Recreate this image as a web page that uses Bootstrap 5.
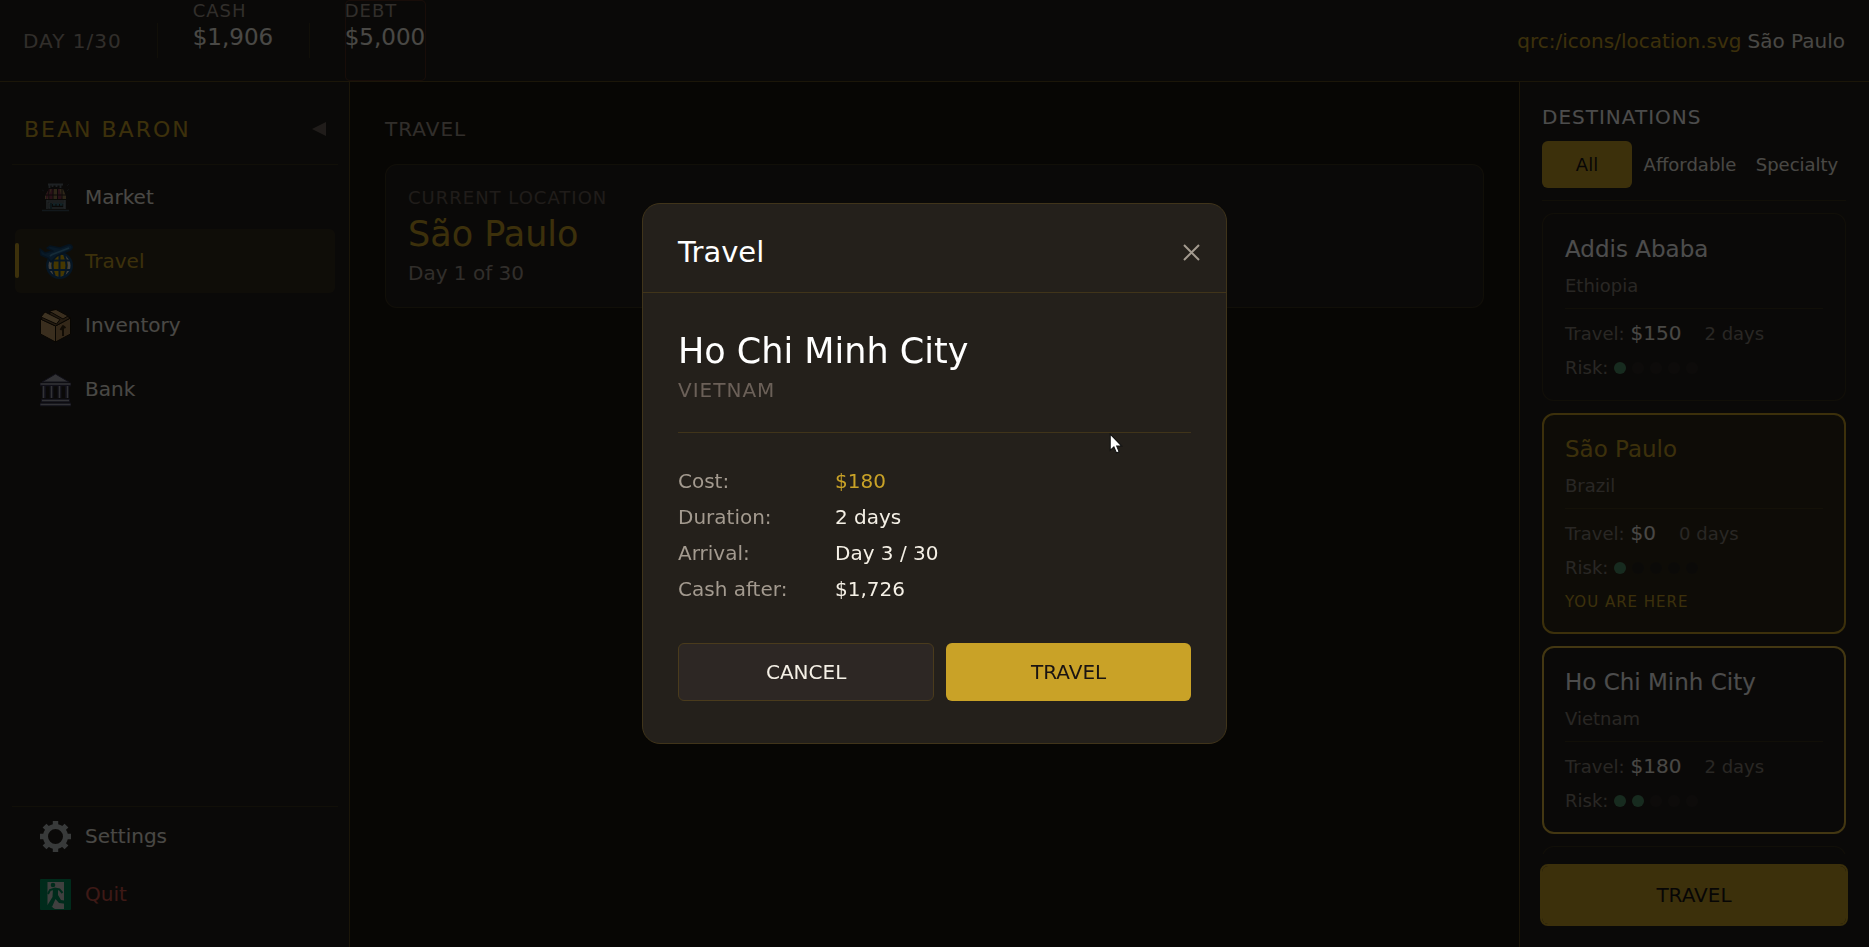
<!DOCTYPE html>
<html lang="en" data-bs-theme="dark">
<head>
<meta charset="utf-8">
<meta name="viewport" content="width=device-width, initial-scale=1">
<title>Bean Baron</title>
<link href="https://cdn.jsdelivr.net/npm/bootstrap@5.3.0/dist/css/bootstrap.min.css" rel="stylesheet">
<style>
:root{--gold:#c9a227;--ink:#f5f0e6;--soft:#a39a8f;--faint:#6b6058;--surface:#24201b;--ground:#1a1610;--edge:rgba(201,162,39,.34);--edge-soft:rgba(201,162,39,.14)}
body{font-family:"DejaVu Sans",sans-serif;font-size:20px;line-height:24px;color:var(--ink);background:var(--ground)}
button{font-family:inherit}
a{text-decoration:none}
h1,h2,h3,p,dl,dd,dt{margin:0;font-weight:400}
.spaced{letter-spacing:1px}
.soft{color:var(--soft)}
.dim{color:#8a827a}
.faint{color:var(--faint)}
.gold{color:var(--gold)}
.t15{font-size:15px;line-height:21px}
.t18{font-size:18px;line-height:21px}
.t20{font-size:20px;line-height:24px}
.t22{font-size:22px;line-height:27px}
.t23{font-size:23px;line-height:27px}
.t29{font-size:29px;line-height:34px}
.t35{font-size:35px;line-height:41px}
.rule{height:1px;background:var(--edge-soft);flex:none}

.topbar{height:82px;padding:0 24px 0 23px;background:var(--surface);border-bottom:1px solid var(--edge)}
.stats{gap:35px}
.tick{width:1px;height:35px;background:var(--edge-soft)}
.stat{gap:3px;min-width:81px}
.stat-debt{border-radius:5px;box-shadow:inset 0 0 0 1px rgba(192,80,50,.3)}
.place{gap:6px}

.side{width:350px;flex:none;padding:12px 11px 24px 12px;background:var(--surface);border-right:1px solid var(--edge)}
.brand{height:70px;padding:0 12px}
.brand h1{letter-spacing:2px}
.fold{border:0;background:none;padding:0;color:var(--faint)}
.menu{padding:0 3px}
.entry{height:64px;padding:0 23px;gap:12px;color:var(--ink);border-radius:6px;position:relative}
.entry svg{width:35px;height:35px;flex:none}
.entry.on{color:var(--gold);background:rgba(201,162,39,.1)}
.entry.on::before{content:"";position:absolute;left:0;top:14px;width:4px;height:35px;border-radius:2px;background:var(--gold)}
.entry.low{height:58px}
.quit{color:#d0564c}

.stage{padding:35px}
.here{margin-top:23px;padding:22px;border:1px solid var(--edge-soft);border-radius:12px;background:var(--surface)}
.here div + div{margin-top:6px}

.dest{width:350px;flex:none;padding:23px 23px 23px 22px;gap:12px;background:var(--surface);border-left:1px solid var(--edge)}
.filters{gap:6px}
.filters button{height:47px;border:0;border-radius:6px;background:none;color:var(--ink);padding:0}
.filters .on{background:var(--gold);color:#1a1412}
.f-a{flex:90 1 0}.f-b{flex:104 1 0}.f-c{flex:98 1 0}
.cities{gap:12px;min-height:0}
.city{flex:none;padding:22px;gap:12px;border:1px solid var(--edge-soft);border-radius:12px;background:var(--surface)}
.city.now,.city.pick{border:2px solid var(--gold);padding:21px}
.city.now{background:#302a1a}
.city.pick{border-color:#e0b83c}
.fare{gap:6px}
.fare .days{margin-left:17px}
.risk{gap:6px}
.risk i{width:12px;height:12px;border-radius:6px;background:#2d2724}
.risk i.lit{background:#4f8f68}
.city.now .risk i:not(.lit){background:#27241d}
.placed{padding-top:2px;margin-bottom:-2px}
.go{height:58px;border:0;border-radius:6px;background:var(--gold);color:#1a1412;outline:2px solid var(--gold)}

.modal-backdrop{--bs-backdrop-opacity:.7}
.modal-dialog{--bs-modal-width:585px;max-width:585px}
.ask{position:relative;border:1px solid #40341a;border-radius:18px;background:var(--surface);color:var(--ink)}
.ask header{padding:31px 26px 23px 35px;border-bottom:1px solid #40341a}
.shut{border:0;background:none;padding:0;width:17px;height:24px;color:var(--soft);display:flex;align-items:center;justify-content:center}
.ask-body{padding:38px 35px 42px}
.ask-body .rule{background:#40341a;margin:30px 0 36px}
.country{margin-top:6px}
.facts{display:grid;grid-template-columns:157px 1fr;row-gap:12px}
.choice{gap:12px;margin-top:42px}
.choice button{height:58px;border-radius:6px}
.cancel{flex:256 1 0;border:1px solid #4a3b1c;background:#2d2724;color:var(--ink)}
.confirm{flex:246 1 0;border:0;background:var(--gold);color:#1a1412}
.pointer{position:absolute;left:80%;top:229px;width:15px;height:22px}
</style>
<script src="https://cdn.jsdelivr.net/npm/bootstrap@5.3.0/dist/js/bootstrap.bundle.min.js" defer></script>
</head>
<body class="overflow-hidden">
<div class="d-flex flex-column vh-100">
  <div class="topbar d-flex justify-content-between flex-shrink-0">
    <div class="stats d-flex align-items-center">
      <span class="soft spaced">DAY 1/30</span>
      <span class="tick"></span>
      <div class="stat d-flex flex-column align-self-stretch"><span class="t18 spaced soft">CASH</span><span class="t23">$1,906</span></div>
      <span class="tick"></span>
      <div class="stat stat-debt d-flex flex-column align-self-stretch"><span class="t18 spaced soft">DEBT</span><span class="t23">$5,000</span></div>
    </div>
    <div class="place d-flex align-items-center"><span class="gold">qrc:/icons/location.svg</span><span>São Paulo</span></div>
  </div>

  <div class="d-flex flex-grow-1 overflow-hidden">
    <nav class="side d-flex flex-column" aria-label="Main">
      <div class="brand d-flex align-items-center justify-content-between">
        <h1 class="t22 gold">BEAN BARON</h1>
        <button class="fold" type="button" aria-label="Collapse sidebar"><svg width="14" height="14" viewBox="0 0 14 14" class="d-block"><path d="M0 7 14 0V14Z" fill="currentColor"/></svg></button>
      </div>
      <div class="rule"></div>
      <div class="menu d-flex flex-column flex-grow-1">
        <a class="entry d-flex align-items-center" href="#market">
          <svg viewBox="0 0 35 35" opacity=".8">
            <path d="M11.500 4V8M14.500 4V7M18.500 4V7M22.500 4V8M10 4.500H25" stroke="#77838c" stroke-width="1.800"/>
            <path d="M11 9H25L28 16V19H7V16Z" fill="#b79b62"/>
            <path d="M13.500 9H16L14.500 19H11V16ZM19 9H21.500L24 19H20ZM11 9 8 15V19H9L12.500 9Z" fill="#a63f61"/>
            <path d="M7 15H28M10.800 9V19M15 9V19M19.500 9V19M24 9V19" stroke="#2b1a20" stroke-width="1"/>
            <path d="M9 20V29M27 20V29M9 21H27M11 28V23H26V28Z" fill="none" stroke="#82929d" stroke-width="1.500"/>
            <path d="M15 24.500H26" stroke="#3d8ca0" stroke-width="2.500" stroke-dasharray="2.500 1"/>
            <path d="M13 23V29" stroke="#2d5965" stroke-width="2"/>
            <path d="M4 30.500H31" stroke="#456071" stroke-width="1.500"/>
            <path d="M4 10 6 11M29 6 31 4M29 11 31 9" stroke="#38424a"/>
          </svg>Market</a>
        <a class="entry on d-flex align-items-center" href="#travel" aria-current="page">
          <svg viewBox="0 0 35 35">
            <circle cx="21.500" cy="21.500" r="13.500" fill="#164a78"/>
            <circle cx="21.500" cy="21.500" r="11" fill="#d9d9d2"/>
            <ellipse cx="21.500" cy="21.500" rx="8.500" ry="11" fill="#e6b800"/>
            <path d="M21.500 9V34M10 16.500H33M10 26H33M17 10C14 17 14 26 17 33M26 10C29 17 29 26 26 33" fill="none" stroke="#164a78" stroke-width="2"/>
            <path d="M2 5 7 9 15 7 9 4 12 2 22 4 30 1C34 0 36 4 32 6L19 12 13 18 10 14 3 11Z" fill="#1d5583" stroke="#123f66" stroke-width="1.500" stroke-linejoin="round"/>
            <path d="M13 11 31 4M12 12 15 10" stroke="#4790ba" stroke-width="1.800"/>
          </svg>Travel</a>
        <a class="entry d-flex align-items-center" href="#inventory">
          <svg viewBox="0 0 35 35" stroke="#1d1408" stroke-width="1" stroke-linejoin="round">
            <path d="M2.500 11 17.500 18V34L2.500 26Z" fill="#c19c66"/>
            <path d="M17.500 18 32.500 10V26L17.500 34Z" fill="#ad8654"/>
            <path d="M2.500 11 17 2 32.500 10 17.500 18Z" fill="#7a5c38"/>
            <path d="M11 3 18 1.500 30 8 25 11Z" fill="#c19c66"/>
            <path d="M7 4 22 11.500 18.500 16 3 9Z" fill="#d0aa72"/>
            <path d="M25 28V19M22.500 22 25 18 27.500 20" fill="none" stroke="#3a2913" stroke-width="2"/>
          </svg>Inventory</a>
        <a class="entry d-flex align-items-center" href="#bank">
          <svg viewBox="0 0 35 35">
            <path d="M4 10 17.500 2 31 10Z" fill="#a9a9b1" stroke="#373453" stroke-width="1"/>
            <path d="M2 12.500H33M3 28.500H32M2 32.500H33" stroke="#373453" stroke-width="3.500"/>
            <path d="M2.500 12H32.500M4 28.500H31M2.500 32.500H32.500" stroke="#a9a9b1" stroke-width="1.500"/>
            <path d="M6 14V26M13.500 14V26M21.500 14V26M29 14V26" stroke="#373453" stroke-width="4"/>
            <path d="M5.500 14V26M13.500 14V26M21.500 14V26M29.500 14V26" stroke="#a9a9b1" stroke-width="1.500"/>
          </svg>Bank</a>
      </div>
      <div class="rule"></div>
      <div class="menu">
        <a class="entry low soft d-flex align-items-center" href="#settings">
          <svg viewBox="-17.500 -17.500 35 35">
            <circle r="10" fill="none" stroke="#bcc2c4" stroke-width="5"/>
            <g fill="#bcc2c4"><path id="cog" d="M-2.700-15.500H2.700V-10H-2.700ZM-2.700 10H2.700V15.500H-2.700Z"/><use href="#cog" transform="rotate(45)"/><use href="#cog" transform="rotate(90)"/><use href="#cog" transform="rotate(135)"/></g>
          </svg>Settings</a>
        <a class="entry low quit d-flex align-items-center" href="#quit">
          <svg viewBox="0 0 35 35">
            <rect x="2" y="2" width="31" height="31" rx="1" fill="#00905c"/>
            <path d="M9.500 5H26V32H17L9.500 28Z" fill="#d8d8d2"/>
            <circle cx="15" cy="8" r="2.300" fill="#00905c"/>
            <path d="M10 17 12 13 17 11.500 21.500 12.500 24.500 16" fill="none" stroke="#00905c" stroke-width="2"/>
            <path d="M15 11 20 12 20 18 23 23 29 24V27L21 26 17.500 22 14 30 9.500 28 14.500 20Z" fill="#00905c"/>
            <path d="M10 28 15 32M27 27 29 31" stroke="#00905c" stroke-width="2"/>
          </svg>Quit</a>
      </div>
    </nav>

    <main class="stage flex-grow-1">
      <h2 class="t20 spaced soft">TRAVEL</h2>
      <section class="here">
        <div class="t18 spaced faint">CURRENT LOCATION</div>
        <div class="t35 gold">São Paulo</div>
        <div class="soft">Day 1 of 30</div>
      </section>
    </main>

    <aside class="dest d-flex flex-column">
      <h2 class="t20 spaced">DESTINATIONS</h2>
      <div class="filters d-flex t18">
        <button class="f-a on" type="button">All</button>
        <button class="f-b" type="button">Affordable</button>
        <button class="f-c" type="button">Specialty</button>
      </div>
      <div class="rule"></div>
      <div class="cities d-flex flex-column flex-grow-1 overflow-hidden">
        <article class="city d-flex flex-column">
          <h3 class="t23">Addis Ababa</h3>
          <div class="t18 dim">Ethiopia</div>
          <div class="rule"></div>
          <div class="fare d-flex align-items-center"><span class="t18 dim">Travel:</span><span>$150</span><span class="t18 dim days">2 days</span></div>
          <div class="risk d-flex align-items-center t18 dim"><span>Risk:</span><i class="lit"></i><i></i><i></i><i></i><i></i></div>
        </article>
        <article class="city now d-flex flex-column">
          <h3 class="t23 gold">São Paulo</h3>
          <div class="t18 dim">Brazil</div>
          <div class="rule"></div>
          <div class="fare d-flex align-items-center"><span class="t18 dim">Travel:</span><span>$0</span><span class="t18 dim days">0 days</span></div>
          <div class="risk d-flex align-items-center t18 dim"><span>Risk:</span><i class="lit"></i><i></i><i></i><i></i><i></i></div>
          <div class="placed t15 spaced gold">YOU ARE HERE</div>
        </article>
        <article class="city pick d-flex flex-column">
          <h3 class="t23">Ho Chi Minh City</h3>
          <div class="t18 dim">Vietnam</div>
          <div class="rule"></div>
          <div class="fare d-flex align-items-center"><span class="t18 dim">Travel:</span><span>$180</span><span class="t18 dim days">2 days</span></div>
          <div class="risk d-flex align-items-center t18 dim"><span>Risk:</span><i class="lit"></i><i class="lit"></i><i></i><i></i><i></i></div>
        </article>
        <article class="city"></article>
      </div>
      <button class="go flex-shrink-0" type="button">TRAVEL</button>
    </aside>
  </div>
</div>

<div class="modal-backdrop show"></div>
<div class="modal show d-block" tabindex="-1" role="dialog" aria-modal="true" aria-labelledby="askTitle">
  <div class="modal-dialog modal-dialog-centered">
    <div class="modal-content ask">
      <header class="d-flex align-items-center justify-content-between">
        <h2 class="t29" id="askTitle">Travel</h2>
        <button class="shut" type="button" aria-label="Close"><svg width="17" height="17" viewBox="0 0 17 17"><path d="M1 1 16 16M16 1 1 16" stroke="currentColor" stroke-width="2"/></svg></button>
      </header>
      <div class="ask-body">
        <h3 class="t35">Ho Chi Minh City</h3>
        <p class="country spaced faint">VIETNAM</p>
        <div class="rule"></div>
        <dl class="facts">
          <dt class="soft">Cost:</dt><dd class="gold">$180</dd>
          <dt class="soft">Duration:</dt><dd>2 days</dd>
          <dt class="soft">Arrival:</dt><dd>Day 3 / 30</dd>
          <dt class="soft">Cash after:</dt><dd>$1,726</dd>
        </dl>
        <div class="choice d-flex">
          <button class="cancel" type="button">CANCEL</button>
          <button class="confirm" type="button">TRAVEL</button>
        </div>
      </div>
      <svg class="pointer" viewBox="0 0 14 21" aria-hidden="true"><path d="M1 1V16.500L4.500 13.300 7 19 9.500 18 7.200 12.500H12Z" fill="#fff" stroke="#111" stroke-width="1"/></svg>
    </div>
  </div>
</div>
</body>
</html>
